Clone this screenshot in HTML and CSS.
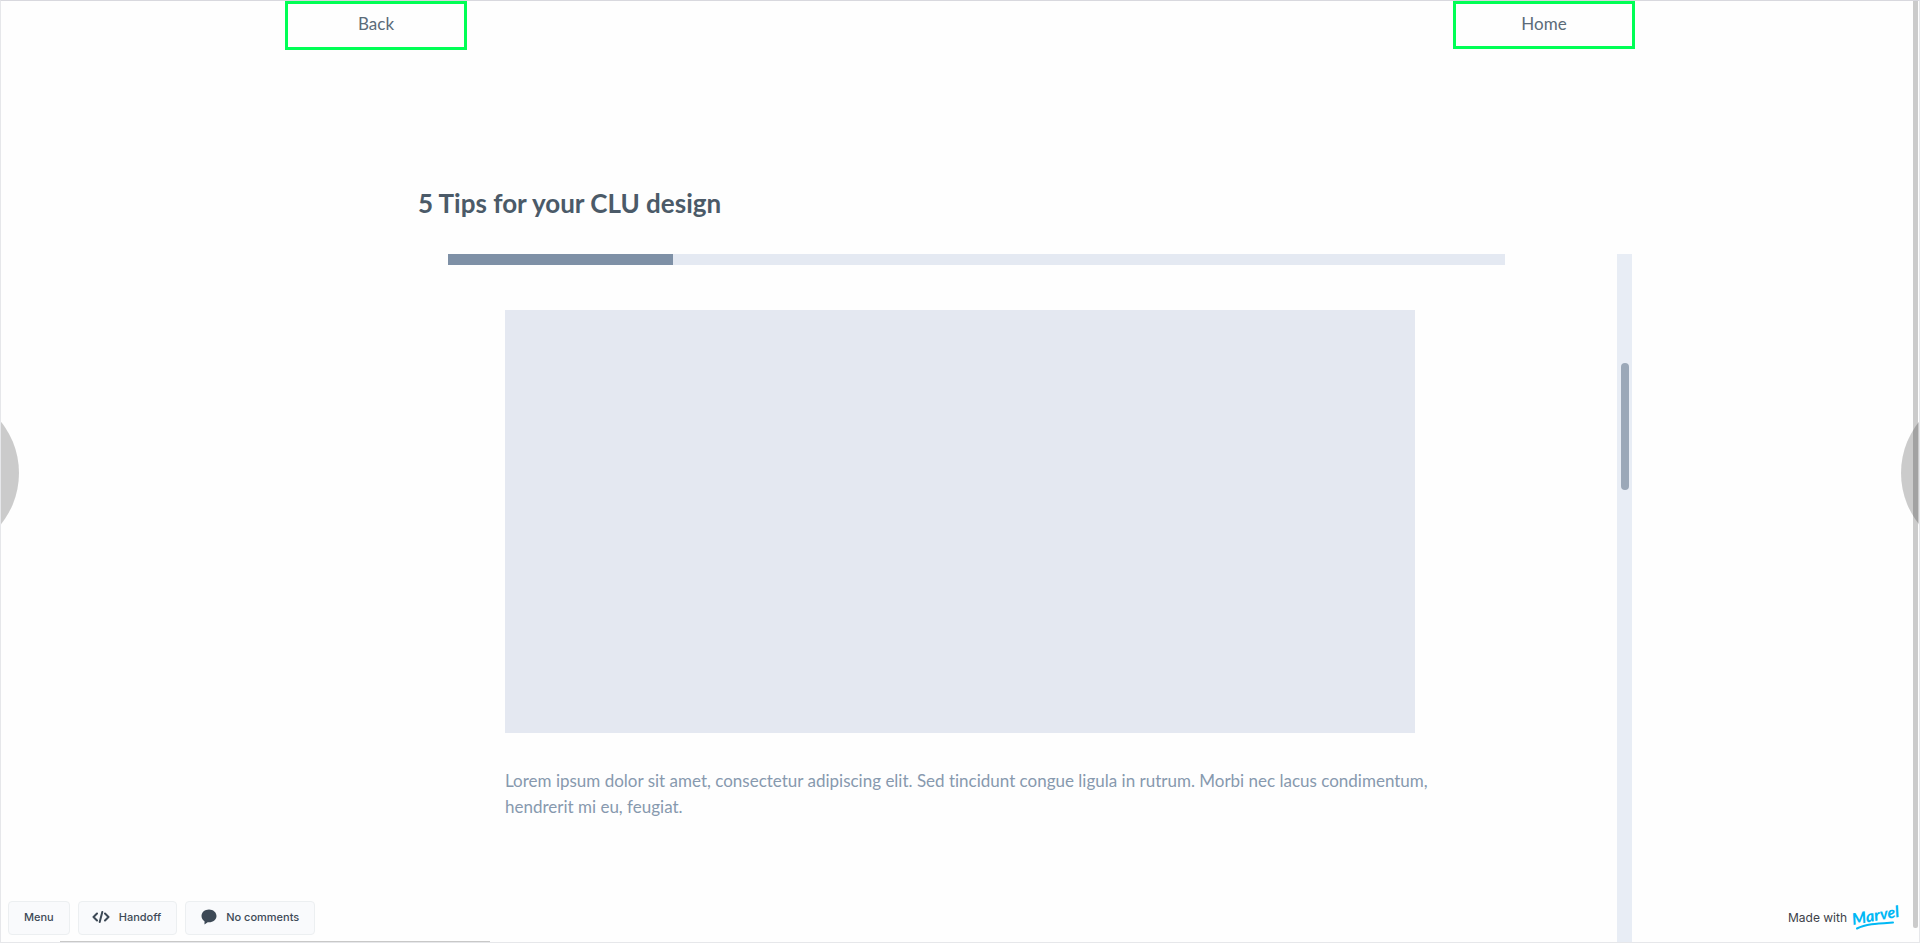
FILE: index.html
```html
<!DOCTYPE html>
<html lang="en">
<head>
<meta charset="utf-8">
<meta name="viewport" content="width=device-width, initial-scale=1">
<title>5 Tips for your CLU design</title>
<link rel="stylesheet" href="styles.css">
</head>
<body>
<div class="viewer">
  <div class="screen">
    <nav class="topbar">
      <a class="hotspot hotspot-back" href="#back">Back</a>
      <a class="hotspot" href="#home">Home</a>
    </nav>
    <h1 class="title">5 Tips for your CLU design</h1>
    <div class="content">
      <main class="lesson">
        <div class="progress"><div class="progress-fill"></div></div>
        <article class="article">
          <div class="media"></div>
          <p class="copy">Lorem ipsum dolor sit amet, consectetur adipiscing elit. Sed tincidunt congue ligula in rutrum. Morbi nec lacus condimentum, hendrerit mi eu, feugiat.</p>
        </article>
      </main>
      <div class="track"><div class="thumb"></div></div>
    </div>
  </div>
  <div class="window-scroll-y"></div>
  <div class="window-scroll-x"></div>
  <button class="pager pager-prev" type="button" aria-label="Previous screen"></button>
  <button class="pager pager-next" type="button" aria-label="Next screen"></button>
  <footer class="toolbar">
    <div class="actions">
      <button class="action" type="button">Menu</button>
      <button class="action" type="button">
        <svg class="code-icon" width="18" height="12" viewBox="0 0 18 12" fill="none" stroke="currentColor" stroke-width="2" stroke-linecap="round" stroke-linejoin="round"><path d="M5 2.500 1.500 6 5 9.500M13 2.500l3.500 3.500-3.500 3.500M10.300 1 7.700 11"/></svg>
        Handoff
      </button>
      <button class="action" type="button">
        <svg width="16" height="16" viewBox="0 0 16 16" fill="currentColor"><path d="M8 .5C3.800.5.500 3.300.500 7c0 2.300 1.200 4 3 5.200V15.500l3.200-2.300c.4.100.8.100 1.300.100 4.200 0 7.500-2.700 7.500-6.300S12.200.5 8 .5Z"/></svg>
        No comments
      </button>
    </div>
    <a class="credit" href="#marvel">Made with
      <svg class="logo" width="48" height="34" viewBox="0 0 48 34" aria-label="Marvel"><text class="logo-text" x="0" y="25" transform="rotate(-10 0 25)">Marvel</text><path d="M4 28.500C13 24 25 23.500 40 22.500" fill="none" stroke="#00b8f5" stroke-width="2" stroke-linecap="round"/></svg>
    </a>
  </footer>
</div>
</body>
</html>
```
FILE: styles.css
```css
* { box-sizing: border-box; }
body { margin: 0; background: #fefefe; font-family: Lato, "Liberation Sans", sans-serif; }
.viewer {
  position: relative;
  height: 100vh;
  overflow: hidden;
  border: 1px solid #e6e7ea;
  border-top-color: #d8d8de;
}
.screen {
  display: flex;
  flex-direction: column;
  height: 100%;
  max-width: 1350px;
  margin: 0 auto;
}
.topbar { display: flex; justify-content: space-between; align-items: flex-start; }
.hotspot {
  display: flex;
  align-items: center;
  justify-content: center;
  width: 182px;
  height: 48px;
  padding-bottom: 4px;
  border: 3px solid #00ff55;
  color: #5b6b79;
  font-size: 17px;
  text-decoration: none;
}
.hotspot-back { height: 49px; }
.title {
  margin: 135px 0 0 133px;
  color: #4b5a68;
  font-size: 26px;
  line-height: 36px;
  font-weight: 700;
}
.content { display: flex; flex: 1; justify-content: space-between; margin-top: 33px; padding: 0 3px 0 163px; }
.lesson { flex: 1; max-width: 1057px; }
.progress { height: 11px; background: #e4e9f2; }
.progress-fill { width: 225px; height: 100%; background: #7e90a6; }
.article { margin: 45px 90px 0 57px; }
.media { height: 423px; background: #e4e8f1; }
.copy { margin: 35px -24px 0 0; color: #8799ae; font-size: 17px; line-height: 26px; font-variant-ligatures: none; }
.track { width: 15px; padding: 109px 3px 0 4px; background: #e8edf5; }
.thumb { height: 127px; border-radius: 4px; background: #9ba8b8; }
.window-scroll-y { position: absolute; top: 0; right: 1px; bottom: 14px; width: 5px; border-radius: 0 0 2px 2px; background: #cbcbcb; }
.window-scroll-x { position: absolute; left: 59px; bottom: 0; width: 430px; height: 1px; background: #c8c8c8; }
.pager { position: absolute; top: 50%; width: 164px; height: 164px; margin-top: -81px; padding: 0; border: 0; border-radius: 50%; background: rgba(0, 0, 0, 0.2); }
.pager-prev { left: -146px; }
.pager-next { right: -146px; }
.toolbar {
  position: absolute;
  left: 7px;
  right: 18px;
  bottom: 6px;
  display: flex;
  align-items: center;
  justify-content: space-between;
  font-family: Inter, "Liberation Sans", sans-serif;
  font-size: 12px;
}
.actions { display: flex; gap: 8px; }
.action {
  display: flex;
  align-items: center;
  gap: 9px;
  height: 34px;
  padding: 0 15px 2px;
  border: 1px solid #eceff1;
  border-radius: 4px;
  background: #f9fafc;
  color: #3d4956;
  font: inherit;
  font-size: 11px;
  font-weight: 500;
}
.code-icon { margin-left: -2px; }
.credit { display: flex; align-items: center; gap: 6px; padding-bottom: 2px; color: #3d4148; text-decoration: none; }
.logo { overflow: visible; }
.logo-text { fill: #00b8f5; font-family: Lato, sans-serif; font-size: 16px; font-weight: 900; font-style: italic; }
```
